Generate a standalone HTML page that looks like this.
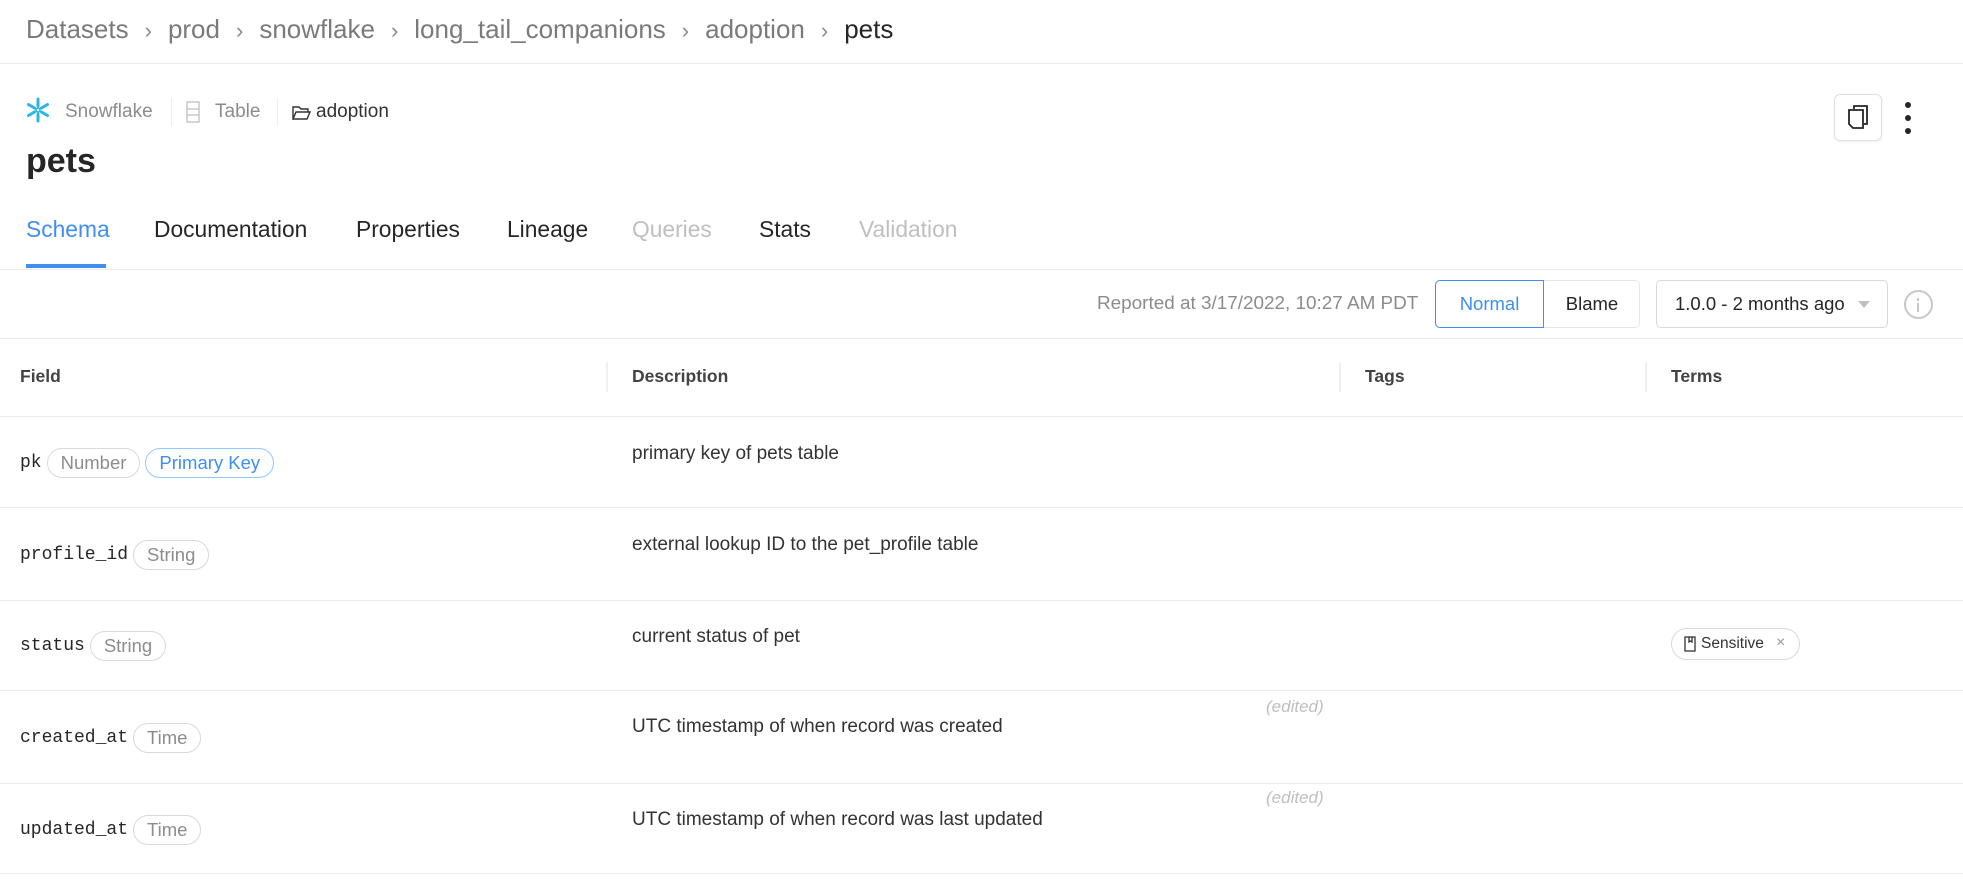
<!DOCTYPE html>
<html><head><meta charset="utf-8"><style>
*{margin:0;padding:0;box-sizing:border-box}
body{width:1963px;height:881px;background:#fff;font-family:"Liberation Sans",sans-serif;color:#262626;position:relative;overflow:hidden}
.a{position:absolute;white-space:nowrap}
.hl{position:absolute;left:0;width:1963px;height:1px;background:#ebebeb}
.bc{font-size:26px;color:#7a7a7a;top:14px;left:26px}
.bc b{font-weight:normal;color:#8a8a8a;margin:0 16px;font-size:22px}
.tab{font-size:22.8px;top:216px;color:#262626}
.pill{display:inline-block;border:1px solid #d9d9d9;border-radius:15px;height:30px;line-height:28px;padding:0 13px;font-size:18.5px;color:#8c8c8c;vertical-align:middle;margin-left:5px;font-family:"Liberation Sans",sans-serif}
.fld{font-family:"Liberation Mono",monospace;font-size:18px;color:#262626}
.row{position:absolute;left:20px;display:flex;align-items:center}
.desc{font-size:19px;left:632px;color:#333}
.hd{font-size:17.5px;top:366px;color:#434343;font-weight:bold}
.vd{position:absolute;top:362px;width:2px;height:30px;background:#f0f0f0}
.ed{font-size:17px;color:#bfbfbf;font-style:italic;left:1266px}
</style></head><body>
<div class="a bc">Datasets<b>›</b>prod<b>›</b>snowflake<b>›</b>long_tail_companions<b>›</b>adoption<b>›</b><span style="color:#262626">pets</span></div>
<div class="hl" style="top:63px"></div>

<svg class="a" style="left:25px;top:96px" width="26" height="28" viewBox="0 0 26 26" fill="none" stroke="#29b5e8" stroke-width="3" stroke-linecap="round">
<path d="M13 2v7M13 17v7M3.5 7.5l6 3.5M16.5 15l6 3.5M3.5 18.5l6-3.5M16.5 11l6-3.5"/><circle cx="13" cy="13" r="2" stroke-width="1.5"/></svg>
<div class="a" style="left:65px;top:101px;font-size:19px;color:#8c8c8c">Snowflake</div>
<div class="a" style="left:171px;top:98px;width:1px;height:28px;background:#eee"></div>
<svg class="a" style="left:186px;top:101px" width="14" height="22" viewBox="0 0 14 22" fill="none" stroke="#bfbfbf" stroke-width="1.3"><rect x="1" y="1" width="12" height="20"/><path d="M1 8h12M1 14h12"/></svg>
<div class="a" style="left:215px;top:101px;font-size:19px;color:#8c8c8c">Table</div>
<div class="a" style="left:277px;top:98px;width:1px;height:28px;background:#eee"></div>
<svg class="a" style="left:292px;top:105px" width="19" height="16" viewBox="0 0 19 16" fill="none" stroke="#333" stroke-width="1.4"><path d="M1 14V2h6l2 2h7v3M1 14l3-7h14l-3 7z"/></svg>
<div class="a" style="left:316px;top:101px;font-size:19px;color:#333">adoption</div>
<div class="a" style="left:26px;top:142px;font-size:34px;font-weight:bold;color:#262626">pets</div>

<div class="a" style="left:1834px;top:94px;width:48px;height:47px;border:1px solid #e0e0e0;border-radius:6px;box-shadow:0 1px 2px rgba(0,0,0,.06)"></div>
<svg class="a" style="left:1847px;top:105px" width="22" height="24" viewBox="0 0 22 24" fill="none" stroke="#262626" stroke-width="1.8"><path d="M7 4V1h13v18h-3"/><path d="M2 5h14v18H6l-4-4z"/></svg>
<div class="a" style="left:1905px;top:102px;width:6px;height:6px;border-radius:3px;background:#262626"></div>
<div class="a" style="left:1905px;top:115px;width:6px;height:6px;border-radius:3px;background:#262626"></div>
<div class="a" style="left:1905px;top:128px;width:6px;height:6px;border-radius:3px;background:#262626"></div>

<div class="a tab" style="left:26px;color:#3f8ef0">Schema</div>
<div class="a tab" style="left:154px">Documentation</div>
<div class="a tab" style="left:356px">Properties</div>
<div class="a tab" style="left:507px">Lineage</div>
<div class="a tab" style="left:632px;color:#bfbfbf">Queries</div>
<div class="a tab" style="left:759px">Stats</div>
<div class="a tab" style="left:859px;color:#bfbfbf">Validation</div>
<div class="a" style="left:26px;top:264px;width:80px;height:4px;background:#3f8ef0"></div>
<div class="hl" style="top:269px"></div>

<div class="a" style="left:1097px;top:293px;font-size:18.9px;color:#8c8c8c">Reported at 3/17/2022, 10:27 AM PDT</div>
<div class="a" style="left:1435px;top:280px;width:205px;height:48px;border:1px solid #e6e6e6;border-radius:5px"></div>
<div class="a" style="left:1435px;top:280px;width:109px;height:48px;border:1px solid #3f8ef0;border-radius:5px 0 0 5px;color:#3f8ef0;font-size:18.5px;line-height:46px;text-align:center">Normal</div>
<div class="a" style="left:1544px;top:280px;width:96px;height:48px;font-size:18.5px;line-height:48px;text-align:center;color:#262626">Blame</div>
<div class="a" style="left:1656px;top:280px;width:232px;height:48px;border:1px solid #d9d9d9;border-radius:5px;font-size:18.5px;line-height:46px;padding-left:18px;color:#262626">1.0.0 - 2 months ago</div>
<div class="a" style="left:1858px;top:301px;width:0;height:0;border-left:6px solid transparent;border-right:6px solid transparent;border-top:7px solid #bfbfbf"></div>
<div class="a" style="left:1904px;top:290px;width:29px;height:29px;border:2px solid #c8c8c8;border-radius:50%"></div>
<div class="a" style="left:1917px;top:298px;width:2px;height:3px;background:#c8c8c8"></div>
<div class="a" style="left:1917px;top:303px;width:2px;height:9px;background:#c8c8c8"></div>
<div class="hl" style="top:338px;box-shadow:0 3px 6px rgba(0,0,0,.05)"></div>

<div class="a hd" style="left:20px">Field</div>
<div class="vd" style="left:606px"></div>
<div class="a hd" style="left:632px">Description</div>
<div class="vd" style="left:1339px"></div>
<div class="a hd" style="left:1365px">Tags</div>
<div class="vd" style="left:1645px"></div>
<div class="a hd" style="left:1671px">Terms</div>
<div class="hl" style="top:416px"></div>

<div class="row" style="top:448px"><span class="fld">pk</span><span class="pill">Number</span><span class="pill" style="border-color:#91caff;color:#3f8ef0">Primary Key</span></div>
<div class="a desc" style="top:443px">primary key of pets table</div>
<div class="hl" style="top:507px"></div>

<div class="row" style="top:540px"><span class="fld">profile_id</span><span class="pill">String</span></div>
<div class="a desc" style="top:534px">external lookup ID to the pet_profile table</div>
<div class="hl" style="top:600px"></div>

<div class="row" style="top:631px"><span class="fld">status</span><span class="pill">String</span></div>
<div class="a desc" style="top:626px">current status of pet</div>
<div class="a" style="left:1671px;top:628px;width:129px;height:32px;border:1px solid #d9d9d9;border-radius:16px"></div>
<svg class="a" style="left:1684px;top:636px" width="12" height="16" viewBox="0 0 12 16" fill="none" stroke="#333" stroke-width="1.3"><rect x="1" y="1" width="10" height="14"/><path d="M5 1v5l1.5-1 1.5 1V1"/></svg>
<div class="a" style="left:1701px;top:635px;font-size:15.5px;color:#333">Sensitive</div>
<div class="a" style="left:1776px;top:634px;font-size:16px;color:#999">×</div>
<div class="hl" style="top:690px"></div>

<div class="row" style="top:723px"><span class="fld">created_at</span><span class="pill">Time</span></div>
<div class="a ed" style="top:697px">(edited)</div>
<div class="a desc" style="top:716px">UTC timestamp of when record was created</div>
<div class="hl" style="top:783px"></div>

<div class="row" style="top:815px"><span class="fld">updated_at</span><span class="pill">Time</span></div>
<div class="a ed" style="top:788px">(edited)</div>
<div class="a desc" style="top:809px">UTC timestamp of when record was last updated</div>
<div class="hl" style="top:873px"></div>
</body></html>
